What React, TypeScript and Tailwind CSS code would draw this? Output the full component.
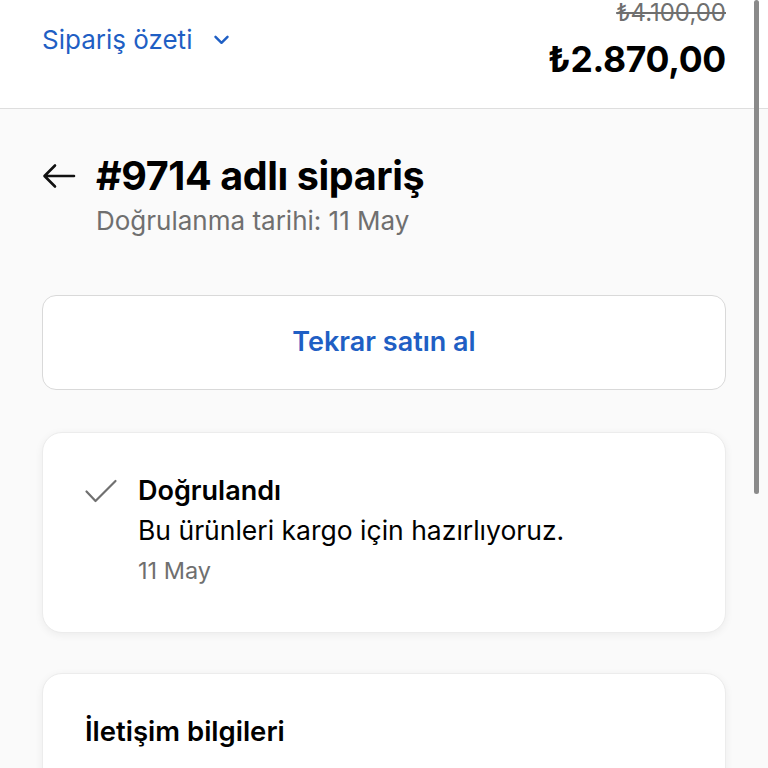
export default function App() {
  return (
    <div
      className="relative h-[768px] w-[768px] overflow-hidden bg-[#fafafa] text-black"
      style={{ fontFamily: "Inter, 'Noto Sans', sans-serif" }}
    >
      {/* Header */}
      <header className="flex h-[109px] items-start justify-between border-b border-[#dedede] bg-white px-[42px]">
        <button className="mt-[24px] flex items-center gap-[22px] text-[26px] leading-[32px] text-[#1f5fc4]">
          <span>Sipariş özeti</span>
          <svg width="15" height="10" viewBox="0 0 15 10" fill="none">
            <path
              d="M1.5 1.8 7.5 7.8 13.5 1.8"
              stroke="#1f5fc4"
              strokeWidth="2.4"
              strokeLinecap="round"
              strokeLinejoin="round"
            />
          </svg>
        </button>
        <div className="flex flex-col items-end">
          <span className="mt-[-2px] text-[24px] leading-[30px] text-[#6f6f6f] line-through decoration-[1.5px]">
            ₺4.100,00
          </span>
          <span className="mt-[11px] text-[35.5px] font-bold leading-[42px] tracking-[-0.3px]">
            ₺2.870,00
          </span>
        </div>
      </header>

      <main className="flex flex-col px-[42px]">
        {/* Title */}
        <div className="mt-[44px] flex items-center gap-[20px]">
          <svg width="34" height="26" viewBox="0 0 34 26" fill="none">
            <path
              d="M32 13H3M13 2.5 2.5 13 13 23.5"
              stroke="#111"
              strokeWidth="2.6"
              strokeLinecap="round"
              strokeLinejoin="round"
            />
          </svg>
          <h1 className="text-[39.5px] font-bold leading-[46px] tracking-[-0.4px]">
            #9714 adlı sipariş
          </h1>
        </div>
        <p className="ml-[54px] mt-[6px] text-[26px] leading-[32px] text-[#6f6f6f]">
          Doğrulanma tarihi: 11 May
        </p>

        {/* Buy again */}
        <button className="mt-[58px] flex h-[95px] w-full items-center justify-center rounded-[14px] border border-[#d9d9d9] bg-white text-[27px] font-semibold text-[#1f5fc4]">
          Tekrar satın al
        </button>

        {/* Status card */}
        <section className="mt-[42px] flex h-[201px] gap-[20px] rounded-[20px] border border-[#ececec] bg-white pl-[41px] pt-[41px] shadow-[0_2px_8px_rgba(0,0,0,0.06)]">
          <svg className="mt-[4px]" width="34" height="26" viewBox="0 0 34 26" fill="none">
            <path
              d="M2.5 13.5 11.5 23 31.5 3"
              stroke="#707070"
              strokeWidth="2.2"
              strokeLinecap="round"
              strokeLinejoin="round"
            />
          </svg>
          <div className="flex flex-col">
            <span className="text-[27px] font-semibold leading-[34px]">Doğrulandı</span>
            <span className="mt-[5px] text-[26.5px] leading-[34px]">
              Bu ürünleri kargo için hazırlıyoruz.
            </span>
            <span className="mt-[9px] text-[23.5px] leading-[30px] text-[#6f6f6f]">11 May</span>
          </div>
        </section>

        {/* Contact card */}
        <section className="mt-[40px] h-[200px] rounded-[20px] border border-[#ececec] bg-white pl-[42px] pt-[40px] shadow-[0_2px_8px_rgba(0,0,0,0.06)]">
          <h2 className="text-[27.5px] font-semibold leading-[34px]">İletişim bilgileri</h2>
        </section>
      </main>

      {/* Scrollbar */}
      <div className="absolute right-[9px] top-0 h-[494px] w-[5px] rounded-full bg-[#8a8a8a]" />
    </div>
  );
}
